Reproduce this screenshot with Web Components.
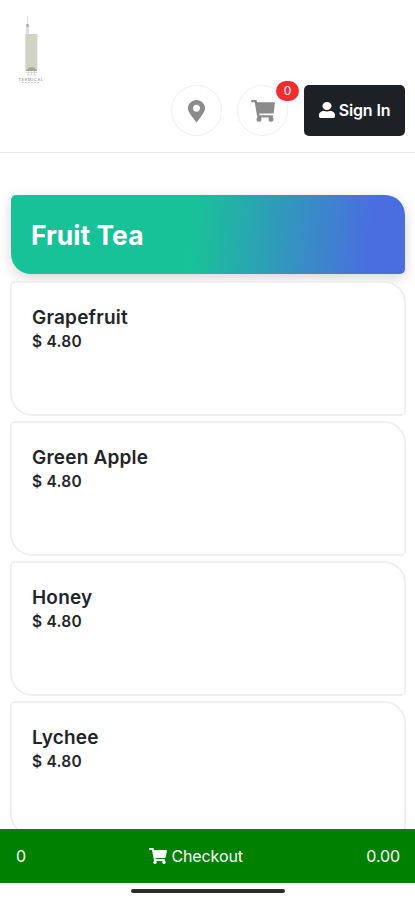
<!DOCTYPE html>
<html lang="en">
<head>
<meta charset="utf-8">
<meta name="viewport" content="width=device-width, initial-scale=1">
<title>Fruit Tea</title>
<style>
    body {
        margin: 0;
        height: 900px;
        overflow: hidden;
        background: #fff;
        color: #212529;
        font-family: Inter, "Liberation Sans", sans-serif;
    }
</style>
</head>
<body>
<menu-app></menu-app>

<script>
const icons = {
    cart: ['0 0 576 512', 'M528.12 301.319l47.273-208C578.806 78.301 567.391 64 551.99 64H159.208l-9.166-44.81C147.758 8.021 137.93 0 126.529 0H24C10.745 0 0 10.745 0 24v16c0 13.255 10.745 24 24 24h69.883l70.248 343.435C147.325 417.1 136 435.222 136 456c0 30.928 25.072 56 56 56s56-25.072 56-56c0-15.674-6.447-29.835-16.824-40h209.647C430.447 426.165 424 440.326 424 456c0 30.928 25.072 56 56 56s56-25.072 56-56c0-22.172-12.888-41.332-31.579-50.405l5.517-24.276c3.413-15.018-8.002-29.319-23.403-29.319H218.117l-6.545-32h293.145c11.206 0 20.92-7.754 23.403-18.681z'],
    user: ['0 0 448 512', 'M224 256c70.7 0 128-57.3 128-128S294.7 0 224 0 96 57.3 96 128s57.3 128 128 128zm89.6 32h-16.7c-22.2 10.2-46.9 16-72.9 16s-50.6-5.8-72.9-16h-16.7C60.2 288 0 348.2 0 422.4V464c0 26.5 21.5 48 48 48h352c26.5 0 48-21.5 48-48v-41.6c0-74.2-60.2-134.4-134.4-134.4z'],
    pin: ['0 0 384 512', 'M172.268 501.67C26.97 291.031 0 269.413 0 192 0 85.961 85.961 0 192 0s192 85.961 192 192c0 77.413-26.97 99.031-172.268 309.67-9.535 13.774-29.93 13.773-39.464 0zM192 272c44.183 0 80-35.817 80-80s-35.817-80-80-80-80 35.817-80 80 35.817 80 80 80z'],
    basket: ['0 0 24 22', 'M1 0h3.800q.8 0 1 .8L6.200 2.300H23.200q.8 0 .7.8L22.800 12.500q-.2 1-1.200 1H8.300l.3 1.700H21.500q.8 0 .8 1.100t-.8 1.100H7.200q-.8 0-1-.9L3.700 2.200H1Q0 2.200 0 1.100T1 0zM8 16.800a2.500 2.500 0 1 1 0 5 2.500 2.500 0 0 1 0-5zm12 0a2.500 2.500 0 1 1 0 5 2.500 2.500 0 0 1 0-5z']
};

class AppIcon extends HTMLElement {
    constructor() {
        super();
        this.attachShadow({ mode: 'open' });
    }

    connectedCallback() {
        const [box, path] = icons[this.getAttribute('name')];
        this.shadowRoot.innerHTML = `
            <style>
                :host { display: block; flex: none; }
                svg { display: block; width: 100%; height: 100%; fill: currentColor; }
            </style>
            <svg viewBox="${box}" preserveAspectRatio="none"><path d="${path}"/></svg>
        `;
    }
}
customElements.define('app-icon', AppIcon);

class ShopLogo extends HTMLElement {
    constructor() {
        super();
        this.attachShadow({ mode: 'open' });
        this.shadowRoot.innerHTML = `
            <style>
                :host { display: block; width: 30px; height: 70px; }
                svg { display: block; }
            </style>
            <svg width="30" height="70" viewBox="0 0 30 70">
                <path d="M9 1h1v8h1v11H8V9h1z" fill="#dcddd4"/>
                <path d="M8.500 9h2v3h-2z" fill="#aaa999"/>
                <path d="M7.300 19h12v36h-12z" fill="#d1d3c7"/>
                <path d="M8 55q5.500-6 11 0v1H8z" fill="#a6a795"/>
                <path d="M8 57.500h11M9 60h9M10.500 56v4m3-4v4m3-4v4" stroke="#dadad4" fill="none"/>
                <text x="0.500" y="65.500" textLength="24.500" font-family="Inter" font-size="3.800" fill="#777">TERMICAL</text>
                <path d="M4 67.500h18" stroke="#d4d4d4" stroke-dasharray="2 1"/>
            </svg>
        `;
    }
}
customElements.define('shop-logo', ShopLogo);

class RoundButton extends HTMLElement {
    constructor() {
        super();
        this.attachShadow({ mode: 'open' });
    }

    connectedCallback() {
        const count = this.getAttribute('count');
        this.shadowRoot.innerHTML = `
            <style>
                :host { display: block; position: relative; color: #8b8b8b; }
                .circle {
                    box-sizing: border-box;
                    width: 51px;
                    height: 51px;
                    display: flex;
                    align-items: center;
                    justify-content: center;
                    border: 1px solid #eee;
                    border-radius: 50%;
                }
                .badge {
                    position: absolute;
                    top: -4px;
                    right: -11px;
                    width: 23px;
                    height: 20px;
                    border-radius: 10px;
                    background: #f42c30;
                    color: #fff;
                    font-size: 12px;
                    line-height: 20px;
                    text-align: center;
                }
            </style>
            <div class="circle"><slot></slot></div>
            ${count === null ? '' : `<span class="badge">${count}</span>`}
        `;
    }
}
customElements.define('round-button', RoundButton);

class ShopHeader extends HTMLElement {
    constructor() {
        super();
        this.attachShadow({ mode: 'open' });
        this.shadowRoot.innerHTML = `
            <style>
                :host {
                    box-sizing: border-box;
                    display: block;
                    height: 153px;
                    padding: 15px 10px 0 18px;
                    border-bottom: 1px solid #e8e8e8;
                }
                .actions {
                    display: flex;
                    justify-content: flex-end;
                }
                round-button { margin-right: 15px; }
                round-button[count] { margin-right: 16px; }
                .pin { width: 17px; height: 22px; margin-top: 1px; }
                .basket { width: 24px; height: 22px; margin-top: 1px; }
                .user { width: 16px; height: 16px; margin-bottom: 1px; }
                button {
                    width: 101px;
                    height: 51px;
                    display: flex;
                    align-items: center;
                    justify-content: center;
                    gap: 4px;
                    padding: 0 0 1px;
                    border: 0;
                    border-radius: 5px;
                    background: #1c2125;
                    color: #fff;
                    font: 600 16px Inter, sans-serif;
                    letter-spacing: -0.15px;
                    white-space: nowrap;
                }
            </style>
            <shop-logo></shop-logo>
            <div class="actions">
                <round-button><app-icon class="pin" name="pin"></app-icon></round-button>
                <round-button count="0"><app-icon class="basket" name="basket"></app-icon></round-button>
                <button><app-icon class="user" name="user"></app-icon>Sign In</button>
            </div>
        `;
    }
}
customElements.define('shop-header', ShopHeader);

class CategoryTitle extends HTMLElement {
    constructor() {
        super();
        this.attachShadow({ mode: 'open' });
        this.shadowRoot.innerHTML = `
            <style>
                :host {
                    box-sizing: border-box;
                    display: flex;
                    align-items: center;
                    height: 79px;
                    margin: 0 1px;
                    padding: 0 20px;
                    border-radius: 5px 20px 5px 20px;
                    background: linear-gradient(94deg, #18c298 0%, #18c298 46%, #4a6ee0 91%, #4a6ee0 100%);
                    box-shadow: 0 4px 14px rgba(0, 0, 0, .16);
                    color: #fff;
                }
                h2 { margin: 0; font-size: 26.500px; font-weight: 700; }
            </style>
            <h2><slot></slot></h2>
        `;
    }
}
customElements.define('category-title', CategoryTitle);

class MenuItem extends HTMLElement {
    constructor() {
        super();
        this.attachShadow({ mode: 'open' });
    }

    connectedCallback() {
        this.shadowRoot.innerHTML = `
            <style>
                :host {
                    box-sizing: border-box;
                    display: block;
                    flex: none;
                    position: relative;
                    height: 135px;
                    padding: 22px 20px;
                    border: 2px solid #efefef;
                    border-radius: 5px 22px 5px 22px;
                    background: #fff;
                }
                h3 { margin: 0; font-size: 19px; font-weight: 600; line-height: 25px; letter-spacing: .2px; }
                p { margin: 0; font-size: 15.500px; font-weight: 600; line-height: 24px; letter-spacing: .25px; }
            </style>
            <h3>${this.getAttribute('name')}</h3>
            <p>$ ${this.getAttribute('price')}</p>
        `;
    }
}
customElements.define('menu-item', MenuItem);

class CheckoutBar extends HTMLElement {
    constructor() {
        super();
        this.attachShadow({ mode: 'open' });
        this.shadowRoot.innerHTML = `
            <style>
                :host { display: block; background: #fff; height: 71px; }
                .bar {
                    box-sizing: border-box;
                    height: 54px;
                    display: flex;
                    align-items: center;
                    justify-content: space-between;
                    padding: 0 15px 0 16px;
                    background: #008000;
                    color: #fff;
                    font-size: 16px;
                    letter-spacing: -0.1px;
                }
                .checkout { display: flex; align-items: center; gap: 4px; }
                app-icon { width: 18px; height: 16px; }
                .handle {
                    width: 154px;
                    height: 4px;
                    margin: 6px auto 0;
                    border-radius: 2px;
                    background: #2d2d2f;
                }
            </style>
            <div class="bar">
                <span>0</span>
                <span class="checkout"><app-icon name="cart"></app-icon><span class="label">Checkout</span></span>
                <span class="total">0.00</span>
            </div>
            <div class="handle"></div>
        `;
    }
}
customElements.define('checkout-bar', CheckoutBar);

class MenuApp extends HTMLElement {
    constructor() {
        super();
        this.attachShadow({ mode: 'open' });
        this.shadowRoot.innerHTML = `
            <style>
                :host { display: flex; flex-direction: column; height: 900px; }
                main {
                    flex: 1;
                    min-height: 0;
                    overflow: hidden;
                    padding: 42px 9px 0 10px;
                }
                .items {
                    display: flex;
                    flex-direction: column;
                    gap: 5px;
                    margin-top: 7px;
                }
            </style>
            <shop-header></shop-header>
            <main>
                <category-title>Fruit Tea</category-title>
                <div class="items">
                    <menu-item name="Grapefruit" price="4.80"></menu-item>
                    <menu-item name="Green Apple" price="4.80"></menu-item>
                    <menu-item name="Honey" price="4.80"></menu-item>
                    <menu-item name="Lychee" price="4.80"></menu-item>
                </div>
            </main>
            <checkout-bar></checkout-bar>
        `;
    }
}
customElements.define('menu-app', MenuApp);
</script>
</body>
</html>
